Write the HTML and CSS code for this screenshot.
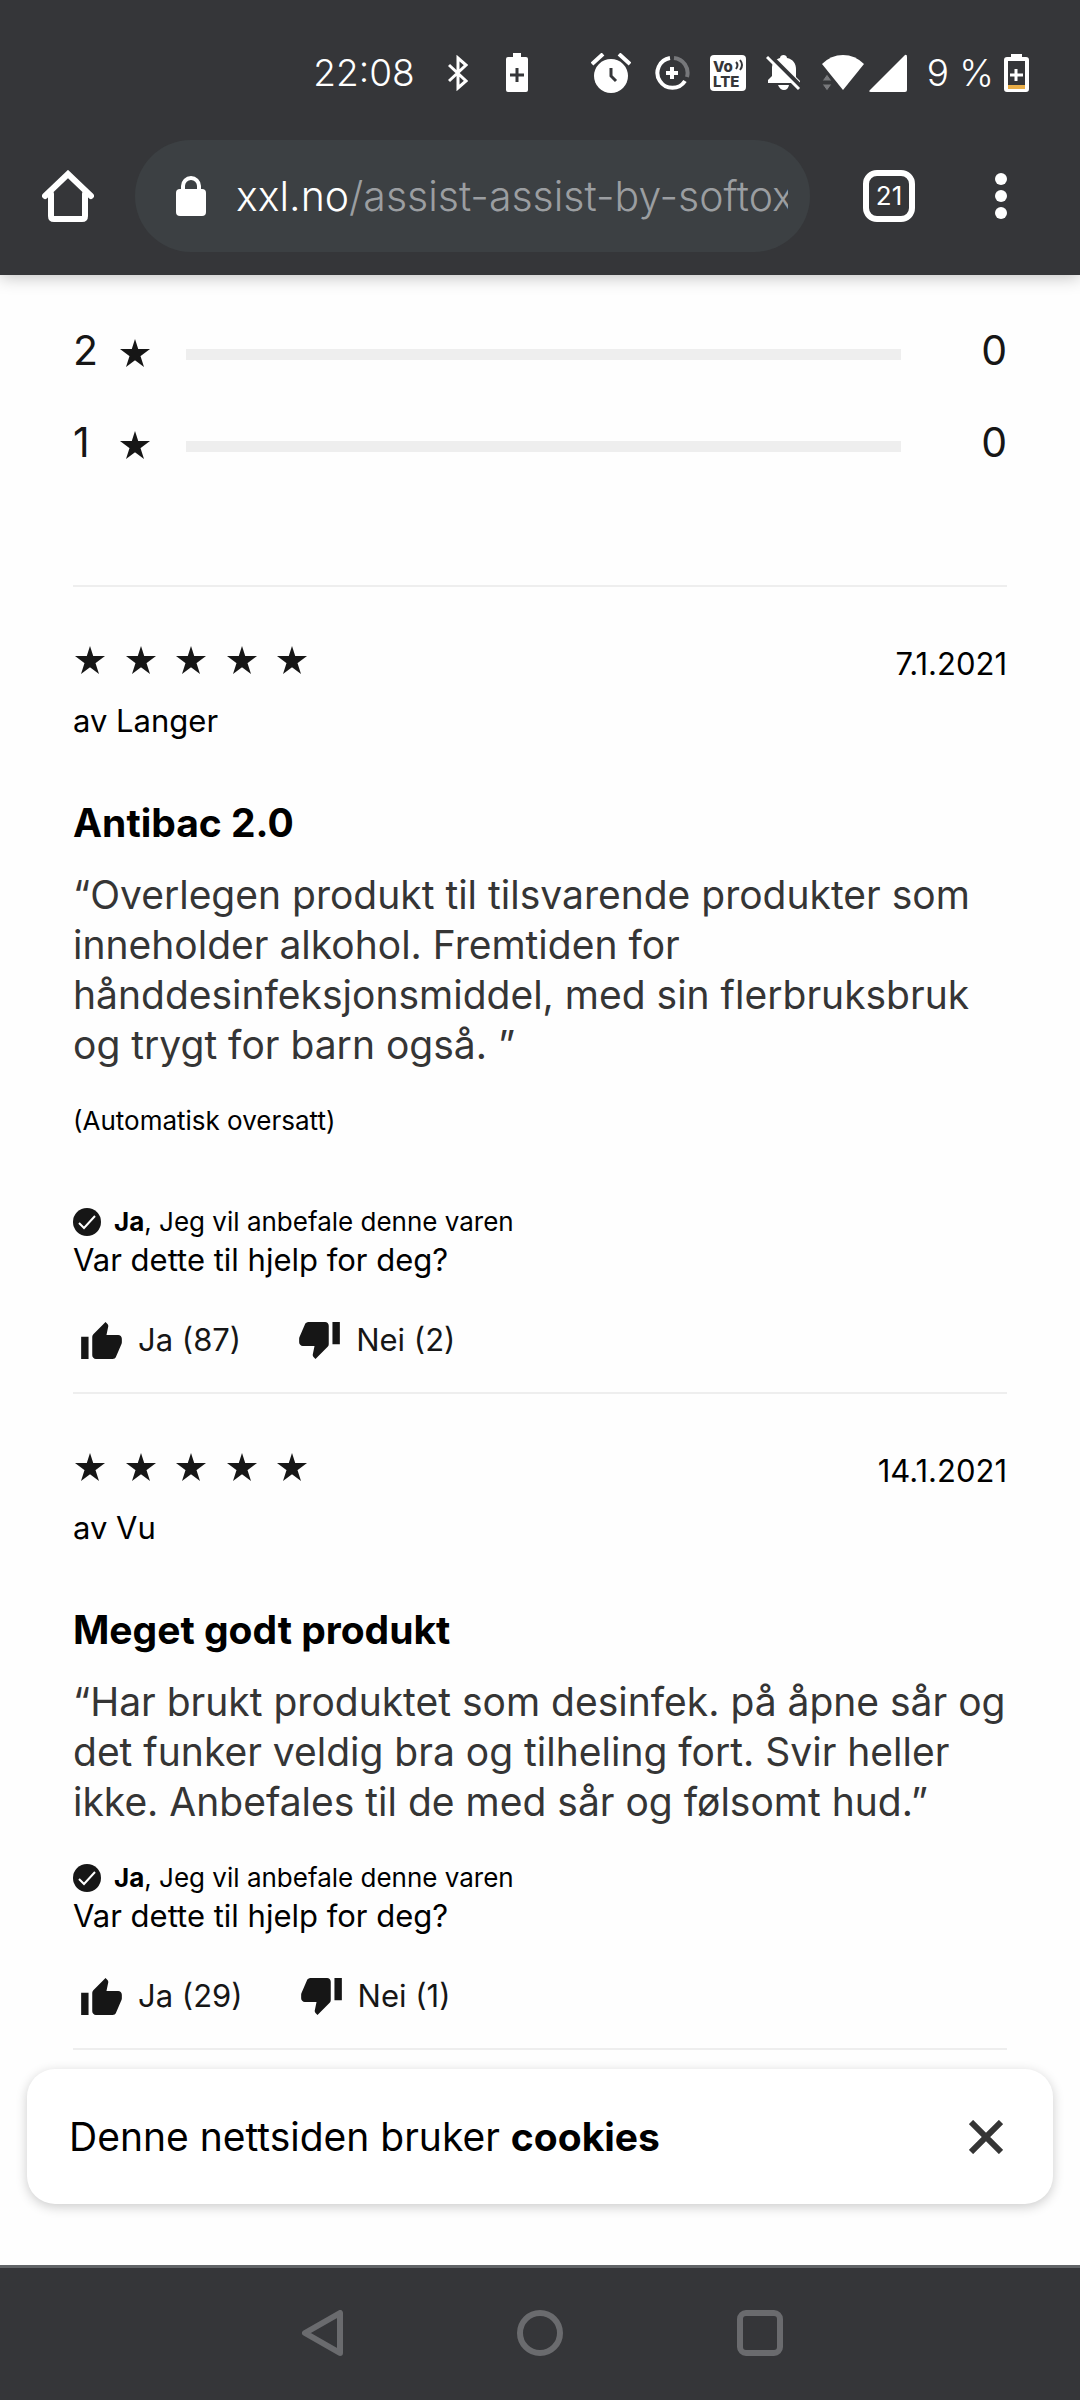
FILE: index.html
```html
<!DOCTYPE html>
<html lang="no">
<head>
  <meta charset="utf-8">
  <meta name="viewport" content="width=device-width, initial-scale=1">
  <title>Assist by Softox – anmeldelser</title>
  <link rel="stylesheet" href="styles.css">
</head>
<body>
  <svg class="defs" aria-hidden="true">
    <symbol id="star" viewBox="0 0 30 28"><path d="M15 0L24 28 0 10H30L6 28Z"/></symbol>
    <symbol id="stars" viewBox="0 0 236 28">
      <use href="#star" x="2" width="30" height="28"/>
      <use href="#star" x="53" width="30" height="28"/>
      <use href="#star" x="103" width="30" height="28"/>
      <use href="#star" x="154" width="30" height="28"/>
      <use href="#star" x="204" width="30" height="28"/>
    </symbol>
    <symbol id="thumb" viewBox="1 1 22 20"><path d="M1 21h4V9H1v12zm22-11c0-1.1-.9-2-2-2h-6.31l.95-4.57.03-.32c0-.41-.17-.79-.44-1.06L14.17 1 7.59 7.59C7.22 7.95 7 8.45 7 9v10c0 1.1.9 2 2 2h9c.83 0 1.54-.5 1.84-1.22l3.02-7.05c.09-.23.14-.47.14-.73v-2z"/></symbol>
    <symbol id="check" viewBox="0 0 28 28"><circle cx="14" cy="14" r="14"/><path d="M6 15l5 5L22 8" fill="none" stroke="#fff" stroke-width="2"/></symbol>
  </svg>

  <header class="browser">
    <div class="status">
      <span class="clock">22:08</span>
      <svg class="bluetooth" width="20" height="36" viewBox="0 0 20 36" fill="none" stroke="#fff" stroke-width="3"><path d="M1 10L18 26 10 33V3L18 10 1 26"/></svg>
      <svg width="22" height="40" viewBox="0 0 22 40"><path fill="#fff" d="M7 0h8v4h5q2 0 2 2v31q0 2-2 2H2q-2 0-2-2V6q0-2 2-2h5z"/><path d="M11 15v14M4 22h14" stroke="#353639" stroke-width="3"/></svg>
      <svg class="alarm" width="40" height="40" viewBox="0 0 40 40"><circle cx="20" cy="23" r="17" fill="#fff"/><path d="M1 11L12 1M39 11L28 1" stroke="#fff" stroke-width="4"/><path d="M20 15v8l5 5" fill="none" stroke="#353639" stroke-width="3"/></svg>
      <svg width="36" height="36" viewBox="0 0 36 36" fill="none" stroke-width="4"><path d="M16 3A15 15 0 1 0 31 26" stroke="#fff"/><path d="M20 3A15 15 0 0 1 33 22" stroke="#77787b"/><path d="M18 12v12M12 18h12" stroke="#fff"/></svg>
      <svg width="36" height="36" viewBox="0 0 36 36"><rect width="36" height="36" rx="4" fill="#fff"/><text class="volte" x="3" y="17">Vo</text><text class="volte" x="3" y="32">LTE</text><path d="M26 7q3 3 0 7M30 5q4 5 0 10" fill="none" stroke="#353639" stroke-width="2"/></svg>
      <svg width="36" height="36" viewBox="0 0 36 36"><path fill="#fff" d="M2 28v-3l4-4v-8C6 7 10 4 14 3c0-4 7-4 7 0 6 1 9 6 9 11v8l4 4v2zM12 30h11q-1 5-5 5t-6-5z"/><path d="M3 0L36 33" stroke="#353639" stroke-width="5"/><path d="M1 2L33 34" stroke="#fff" stroke-width="3"/></svg>
      <span class="signal">
        <svg width="42" height="36" viewBox="0 0 42 36"><path fill="#fff" d="M0 9Q9 0 21 0T42 9L21 35z"/><path fill="#77787b" stroke="#353639" d="M0 26l5-7 5 7zM0 29l5 7 5-7z"/></svg>
        <svg width="38" height="38" viewBox="0 0 38 38"><path fill="#fff" d="M36 1q2-1 2 2v33q0 2-2 2H2q-3 0-1-2z"/></svg>
      </span>
      <span class="charge">
        <span>9 %</span>
        <svg width="25" height="38" viewBox="0 0 25 38"><path fill="#fff" d="M7 0h11v3h4q3 0 3 3v29q0 3-3 3H3q-3 0-3-3V6q0-3 3-3h4z"/><path fill="#353639" d="M4 7h17v24H4z"/><path fill="#e9ae48" d="M4 31h17v4H4z"/><path d="M12 15v12M6 21h13" stroke="#fff" stroke-width="3"/></svg>
      </span>
    </div>

    <div class="toolbar">
      <button class="tool" type="button" aria-label="Hjem">
        <svg width="52" height="52" viewBox="0 0 52 52" fill="none" stroke="#fff" stroke-width="6" stroke-linecap="round"><path d="M3 26L26 4 49 26" /><path d="M9 24V46q0 3 3 3H40q3 0 3-3V24"/></svg>
      </button>
      <form class="omnibox">
        <svg class="lock" width="30" height="40" viewBox="0 0 30 40"><rect y="13" width="30" height="27" rx="4" fill="#fff"/><path d="M7 16V10a8 8 0 0 1 16 0v6" fill="none" stroke="#fff" stroke-width="4"/></svg>
        <label class="host" for="address">xxl.no</label>
        <input class="path" id="address" type="text" value="/assist-assist-by-softox" spellcheck="false">
      </form>
      <button class="tool tabs" type="button" aria-label="Faner">21</button>
      <button class="tool menu" type="button" aria-label="Meny">
        <svg width="12" height="46" viewBox="0 0 12 46" fill="#fff"><circle cx="6" cy="6" r="6"/><circle cx="6" cy="23" r="6"/><circle cx="6" cy="40" r="6"/></svg>
      </button>
    </div>
  </header>

  <main class="page">
    <section class="ratings">
      <div class="rating"><span>2</span><svg class="rating-star"><use href="#star"/></svg><div class="bar"></div><span class="count">0</span></div>
      <div class="rating"><span>1</span><svg class="rating-star"><use href="#star"/></svg><div class="bar"></div><span class="count">0</span></div>
    </section>

    <article class="review">
      <div class="review-top"><svg class="stars" role="img" aria-label="5 av 5"><use href="#stars"/></svg><time datetime="2021-01-07">7.1.2021</time></div>
      <p class="author">av Langer</p>
      <h2 class="title">Antibac 2.0</h2>
      <p class="quote">“Overlegen produkt til tilsvarende produkter som inneholder alkohol. Fremtiden for hånddesinfeksjonsmiddel, med sin flerbruksbruk og trygt for barn også. ”</p>
      <p class="translated">(Automatisk oversatt)</p>
      <p class="recommend"><svg class="check"><use href="#check"/></svg><span><strong>Ja</strong>, Jeg vil anbefale denne varen</span></p>
      <p class="question">Var dette til hjelp for deg?</p>
      <div class="votes">
        <button class="vote" type="button"><svg class="thumb"><use href="#thumb"/></svg>Ja (87)</button>
        <button class="vote" type="button"><svg class="thumb down"><use href="#thumb"/></svg>Nei (2)</button>
      </div>
    </article>

    <article class="review">
      <div class="review-top"><svg class="stars" role="img" aria-label="5 av 5"><use href="#stars"/></svg><time datetime="2021-01-14">14.1.2021</time></div>
      <p class="author">av Vu</p>
      <h2 class="title">Meget godt produkt</h2>
      <p class="quote">“Har brukt produktet som desinfek. på åpne sår og det funker veldig bra og tilheling fort. Svir heller ikke. Anbefales til de med sår og følsomt hud.”</p>
      <p class="recommend"><svg class="check"><use href="#check"/></svg><span><strong>Ja</strong>, Jeg vil anbefale denne varen</span></p>
      <p class="question">Var dette til hjelp for deg?</p>
      <div class="votes">
        <button class="vote" type="button"><svg class="thumb"><use href="#thumb"/></svg>Ja (29)</button>
        <button class="vote" type="button"><svg class="thumb down"><use href="#thumb"/></svg>Nei (1)</button>
      </div>
    </article>
  </main>

  <aside class="cookies">
    <p>Denne nettsiden bruker <strong>cookies</strong></p>
    <button class="close" type="button" aria-label="Lukk">
      <svg width="34" height="34" viewBox="0 0 34 34" stroke="#353535" stroke-width="6"><path d="M2 2L32 32M32 2L2 32"/></svg>
    </button>
  </aside>

  <nav class="system">
    <button class="tool" type="button" aria-label="Tilbake"><svg width="46" height="46" viewBox="0 0 46 46"><path d="M43 3V43L8 23Z"/></svg></button>
    <button class="tool" type="button" aria-label="Startskjerm"><svg width="46" height="46" viewBox="0 0 46 46"><circle cx="23" cy="23" r="20"/></svg></button>
    <button class="tool" type="button" aria-label="Oversikt"><svg width="46" height="46" viewBox="0 0 46 46"><rect x="3" y="3" width="40" height="40" rx="6"/></svg></button>
  </nav>
</body>
</html>
```
FILE: styles.css
```css
* {
  box-sizing: border-box;
}

body {
  margin: 0;
  min-height: 100vh;
  display: flex;
  flex-direction: column;
  background: #fefefe;
  color: #000;
  font-family: Inter, "Liberation Sans", sans-serif;
  font-size: 31px;
  line-height: 40px;
}

p,
h2 {
  margin: 0;
}

button {
  padding: 0;
  border: 0;
  background: none;
  color: inherit;
  font: inherit;
}

svg {
  display: block;
  flex: none;
}

.defs {
  position: absolute;
  width: 0;
  height: 0;
}

/* Status bar and browser toolbar */

.browser {
  background: #353639;
  color: #fff;
  box-shadow: 0 2px 16px rgba(0, 0, 0, 0.25);
}

.status {
  display: flex;
  justify-content: flex-end;
  align-items: center;
  gap: 20px;
  padding: 50px 51px 0;
  font-size: 37px;
  font-weight: 300;
  line-height: 46px;
}

.clock {
  margin-right: 13px;
}

.bluetooth {
  margin-right: 18px;
}

.alarm {
  margin-left: 43px;
  margin-right: 3px;
}

.volte {
  fill: #353639;
  font-size: 15px;
  font-weight: 800;
}

.signal {
  display: flex;
  align-items: center;
  gap: 5px;
}

.charge {
  display: flex;
  align-items: center;
  gap: 10px;
}

.toolbar {
  display: flex;
  align-items: center;
  padding: 44px 73px 23px 42px;
}

.omnibox {
  flex: 1;
  min-width: 0;
  display: flex;
  align-items: center;
  height: 112px;
  margin: 0 53px 0 41px;
  padding: 0 22px 0 41px;
  border-radius: 56px;
  background: #3c4043;
  font-size: 41px;
  font-weight: 300;
  line-height: 50px;
}

.lock {
  margin-right: 30px;
}

.path {
  flex: 1;
  min-width: 0;
  padding: 0;
  border: 0;
  background: none;
  color: #9b9ea1;
  font: inherit;
}

.tabs {
  width: 52px;
  height: 52px;
  border: 6px solid #fff;
  border-radius: 14px;
  font-size: 26px;
  line-height: 40px;
}

.menu {
  margin-left: 80px;
}

/* Reviews */

.page {
  padding: 50px 73px 0;
}

.ratings {
  display: grid;
  gap: 42px;
  padding-bottom: 118px;
  color: #161616;
  font-size: 41px;
  line-height: 50px;
}

.rating {
  display: grid;
  grid-template-columns: 47px 30px 1fr 106px;
  align-items: center;
}

.rating-star {
  width: 30px;
  height: 28px;
  margin-top: 6px;
  fill: #161616;
}

.bar {
  height: 11px;
  margin: 9px 0 0 36px;
  background: #eee;
}

.count {
  text-align: right;
}

.review {
  padding: 57px 0 32px;
  border-top: 2px solid #eee;
}

.review:last-child {
  border-bottom: 2px solid #eee;
}

.review-top {
  display: flex;
  justify-content: space-between;
}

.stars {
  width: 236px;
  height: 32px;
  fill: #161616;
}

.author {
  margin-top: 17px;
}

.title {
  margin-top: 57px;
  font-size: 39px;
  font-weight: 700;
  line-height: 50px;
}

.quote {
  margin-top: 22px;
  color: #353535;
  font-size: 39px;
  line-height: 50px;
}

.translated {
  margin: 35px 0 69px;
  font-size: 26px;
  line-height: 32px;
}

.recommend {
  display: flex;
  align-items: center;
  gap: 13px;
  margin-top: 35px;
  font-size: 26px;
  line-height: 32px;
}

.check {
  width: 28px;
  height: 28px;
  fill: #161616;
}

.question {
  margin-top: 2px;
}

.votes {
  display: flex;
  gap: 58px;
  margin-top: 40px;
  padding-left: 8px;
  color: #161616;
}

.vote {
  display: flex;
  align-items: center;
  gap: 16px;
}

.thumb {
  width: 41px;
  height: 37px;
  fill: #161616;
}

.down {
  transform: rotate(180deg);
}

/* Cookie notice */

.cookies {
  display: flex;
  justify-content: space-between;
  align-items: center;
  margin: 19px 27px 60px;
  padding: 43px 50px 42px 42px;
  border-radius: 28px;
  background: #fff;
  box-shadow: 0 3px 12px rgba(0, 0, 0, 0.2);
  font-size: 39px;
  line-height: 50px;
}

/* System navigation */

.system {
  display: flex;
  justify-content: center;
  gap: 174px;
  margin-top: auto;
  padding: 42px 0 44px;
  border-top: 3px solid #616467;
  background: #353639;
}

.system svg {
  fill: none;
  stroke: #6a6b6e;
  stroke-width: 6;
  stroke-linejoin: round;
}
```
